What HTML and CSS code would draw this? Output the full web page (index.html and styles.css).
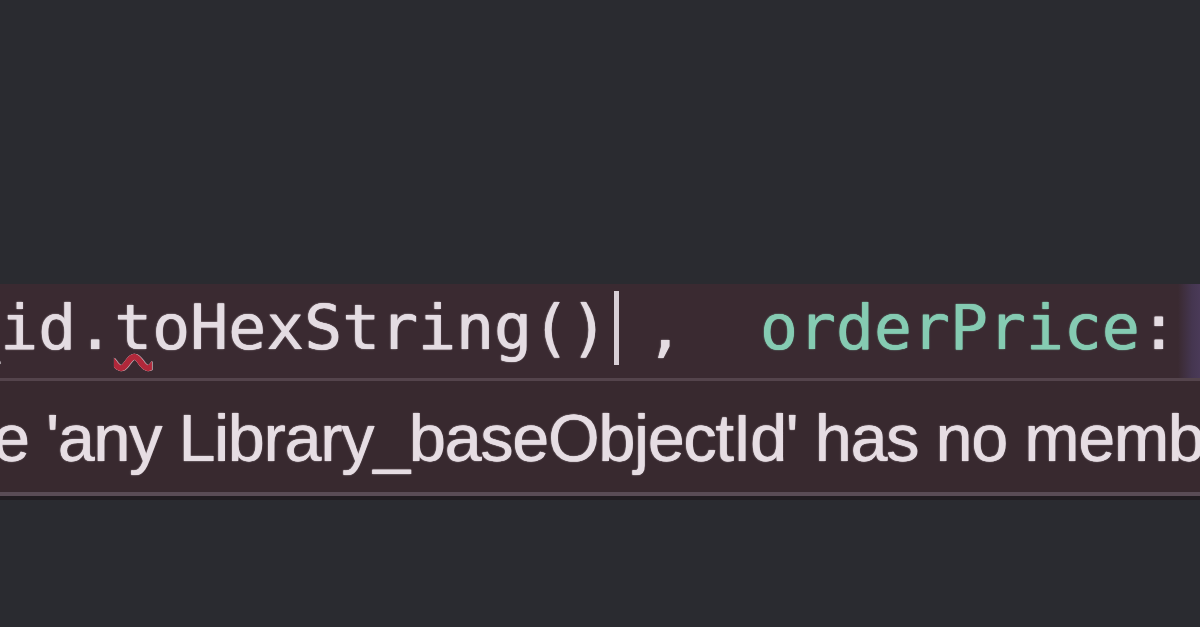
FILE: index.html
```html
<!DOCTYPE html>
<html>
<head>
<meta charset="utf-8">
<link rel="stylesheet" href="styles.css">
</head>
<body>
<div class="editor">
  <div class="spacer"></div>
  <div class="code-line"><span class="code"><span class="plain">_id.</span><span class="err">t</span><span class="plain">oHexString()</span><span class="cursor"></span><span class="plain"> ,  </span><span class="prop">orderPrice</span><span class="plain">:</span></span></div>
  <div class="divider"></div>
  <div class="message"><span class="msg-text">e 'any Library_baseObjectId' has no member 'toHexString'</span></div>
  <div class="msg-border"></div>
  <div class="msg-shadow"></div>
</div>
</body>
</html>
```

FILE: styles.css
```css
html, body {
  margin: 0;
  padding: 0;
  width: 1200px;
  height: 627px;
  overflow: hidden;
  background: #2a2b30;
}
.editor {
  display: flex;
  flex-direction: column;
  width: 1200px;
  height: 627px;
  overflow: hidden;
}
.spacer {
  height: 284px;
  flex: none;
}
.code-line {
  height: 94px;
  flex: none;
  background: linear-gradient(to right, #3a2a31 0, #3a2a31 1178px, #453650 1192px, #4a3a58 1200px);
  display: flex;
  align-items: center;
  overflow: hidden;
  white-space: pre;
}
.code {
  font-family: "DejaVu Sans Mono", monospace;
  font-size: 63.1px;
  line-height: 94px;
  margin-left: -38px;
  margin-top: -8px;
  color: #e4dce2;
  white-space: pre;
  text-shadow: 0 0 1.5px currentColor, 0.6px 0 0 currentColor;
}
.err {
  text-decoration: underline wavy #b0283a;
  text-decoration-thickness: 6px;
  text-underline-offset: 6px;
}
.cursor {
  display: inline-block;
  width: 5px;
  height: 74px;
  background: #d8cfd6;
  vertical-align: -16px;
  margin-left: 6px;
  margin-right: -11px;
}
.prop {
  color: #85cbb2;
}
.divider {
  height: 3px;
  flex: none;
  background: #54444c;
}
.message {
  height: 111px;
  flex: none;
  background: #38292f;
  display: flex;
  align-items: center;
  overflow: hidden;
  white-space: nowrap;
}
.msg-text {
  font-family: "Liberation Sans", Arial, sans-serif;
  font-size: 66px;
  letter-spacing: -1px;
  color: #e6dde3;
  margin-left: -7px;
  margin-top: 2px;
  text-shadow: 0 0 1.5px currentColor, 0.6px 0 0 currentColor;
}
.msg-border {
  height: 4px;
  flex: none;
  background: #5a4c56;
}
.msg-shadow {
  height: 4px;
  flex: none;
  background: #221d22;
}
```
